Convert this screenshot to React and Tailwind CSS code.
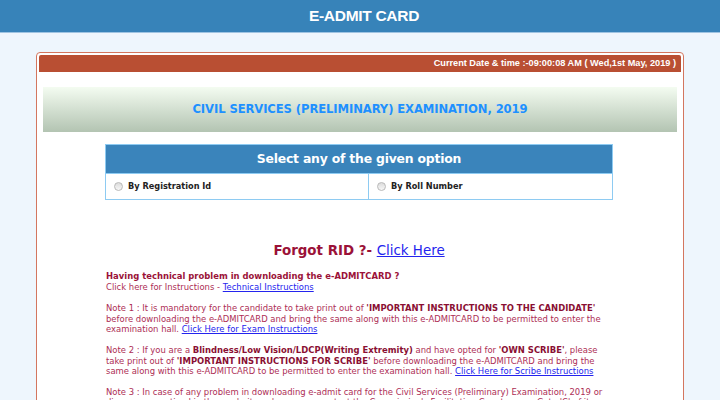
import React from "react";

function Radio() {
  return (
    <span className="inline-block w-[9px] h-[9px] rounded-full border border-[#b9b9b9] bg-gradient-to-b from-[#dcdcdc] to-[#f7f7f7] mr-[5px] shrink-0" />
  );
}

export default function App() {
  const body = { fontFamily: '"DejaVu Sans", Verdana, sans-serif' };
  return (
    <div className="w-[720px] h-[400px] overflow-hidden bg-[#eef6fd]" style={body}>
      <div className="h-[33px] bg-[#3783b9] border-b border-[#9fc4e2] flex items-center justify-center">
        <span className="text-white font-bold text-[15.5px] pl-[8px] tracking-[-0.3px]" style={{ fontFamily: '"Liberation Sans", Arial, sans-serif' }}>
          E-ADMIT CARD
        </span>
      </div>
      <div className="mt-[19px] mx-[36px] border border-[#d3765f] rounded-t-[4px] p-[2px] bg-white h-[400px]">
        <div className="h-[17px] bg-[#b94f33] rounded-t-[2px] flex items-center justify-end pr-[5px]">
          <span className="text-white font-bold text-[9.2px]" style={{ fontFamily: '"Liberation Sans", Arial, sans-serif' }}>
            Current Date &amp; time :-09:00:08 AM ( Wed,1st May, 2019 )
          </span>
        </div>
        <div className="mt-[15px] mx-[4px] h-[45px] bg-gradient-to-b from-[#f4fcf1] to-[#b3c4b2] flex items-center justify-center">
          <span className="text-[#1e90ff] font-bold text-[11.6px] tracking-[-0.1px]">
            CIVIL SERVICES (PRELIMINARY) EXAMINATION, 2019
          </span>
        </div>
        <div className="mt-[12px] ml-[66px] w-[508px]">
          <div className="border border-[#8ecbf2]">
            <div className="h-[29px] bg-[#3a84bb] flex items-center justify-center border-b border-[#8ecbf2]">
              <span className="text-white font-bold text-[12.4px] tracking-[-0.2px]">Select any of the given option</span>
            </div>
            <div className="grid grid-cols-[263px_1fr] h-[25px]">
              <div className="flex items-center pl-[8px] border-r border-[#8ecbf2]">
                <Radio />
                <span className="text-[8.2px] font-bold text-[#222]">By Registration Id</span>
              </div>
              <div className="flex items-center pl-[8px]">
                <Radio />
                <span className="text-[8.2px] font-bold text-[#222]">By Roll Number</span>
              </div>
            </div>
          </div>
          <div className="mt-[42px] text-center text-[13.4px] leading-[18px]">
            <span className="font-bold text-[#9b1238]">Forgot RID ?- </span>
            <a className="text-[#2424ee] underline" href="#">Click Here</a>
          </div>
          <div className="mt-[11px] text-[8.45px] leading-[10.6px] text-[#ad2e55] pl-[1px]">
            <div className="font-bold text-[#9b1238]">Having technical problem in downloading the e-ADMITCARD ?</div>
            <div>
              Click here for Instructions - <a className="text-[#2424ee] underline" href="#">Technical Instructions</a>
            </div>
            <p className="mt-[11px] pr-[4px]">
              Note 1 : It is mandatory for the candidate to take print out of <b className="text-[#8a0f33]">'IMPORTANT INSTRUCTIONS TO THE CANDIDATE'</b> before downloading the e-ADMITCARD and bring the same along with this e-ADMITCARD to be permitted to enter the examination hall. <a className="text-[#2424ee] underline" href="#">Click Here for Exam Instructions</a>
            </p>
            <p className="mt-[10px] pr-[4px]">
              Note 2 : If you are a <b className="text-[#8a0f33]">Blindness/Low Vision/LDCP(Writing Extremity)</b> and have opted for <b className="text-[#8a0f33]">'OWN SCRIBE'</b>, please take print out of <b className="text-[#8a0f33]">'IMPORTANT INSTRUCTIONS FOR SCRIBE'</b> before downloading the e-ADMITCARD and bring the same along with this e-ADMITCARD to be permitted to enter the examination hall. <a className="text-[#2424ee] underline" href="#">Click Here for Scribe Instructions</a>
            </p>
            <p className="mt-[10px] pr-[4px]">
              Note 3 : In case of any problem in downloading e-admit card for the Civil Services (Preliminary) Examination, 2019 or discrepancy noticed in the e-admit card, you may contact the Commission's Facilitation Counter near Gate 'C' of its campus in person or over Telephone Nos.
            </p>
          </div>
        </div>
      </div>
    </div>
  );
}
